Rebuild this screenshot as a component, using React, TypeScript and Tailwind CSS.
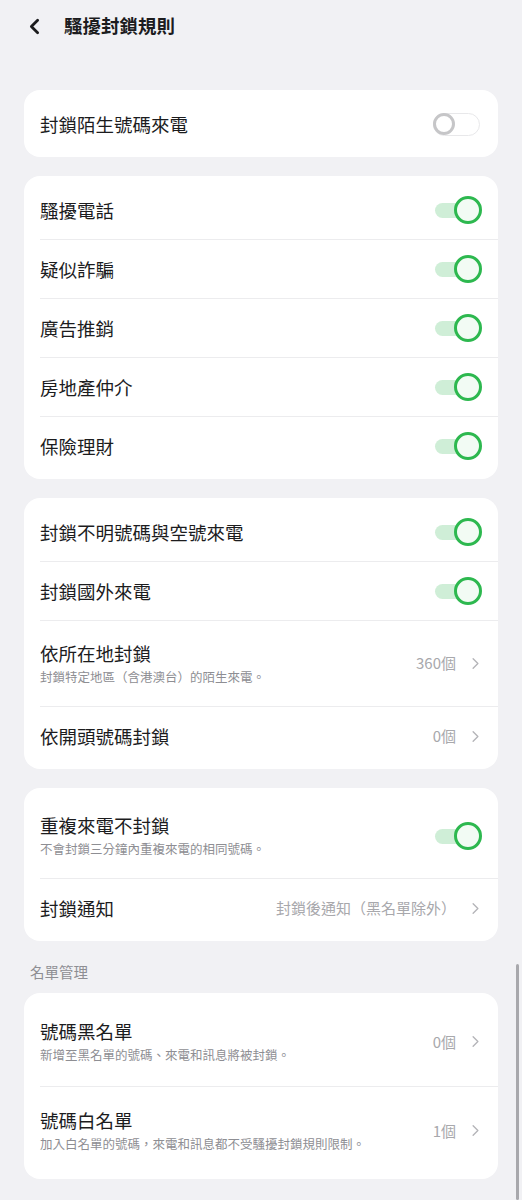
import { ChevronLeft, ChevronRight } from "lucide-react"

type Row = {
  title: string
  sub?: string
  toggle?: "on" | "off"
  value?: string
  tall?: boolean
}

function Toggle({ on }: { on: boolean }) {
  if (on) {
    return (
      <div className="relative w-[47px] h-[28px] shrink-0">
        <div className="absolute left-0 top-[7px] w-[38px] h-[15px] rounded-full bg-[#cfeed7]"></div>
        <div className="absolute right-0 top-0 w-[28px] h-[28px] rounded-full border-[3px] border-[#2db84f] bg-[#f2fbf4]"></div>
      </div>
    )
  }
  return (
    <div className="relative w-[47px] h-[23px] mr-[2px] shrink-0 rounded-full border-[1.5px] border-[#e8e8ea]">
      <div className="absolute left-[-1px] top-[-1px] w-[22px] h-[22px] rounded-full border-[3px] border-[#c6c6c8] bg-white"></div>
    </div>
  )
}

function Card({ rows, tallH = "h-[85px]" }: { rows: Row[]; tallH?: string }) {
  return (
    <div className="mx-[24px] bg-white rounded-[16px] pt-[5px] pb-[4px]">
      {rows.map((r, i) => (
        <div key={r.title} className={"ml-4 " + (i > 0 ? "border-t border-[#ececee]" : "")}>
          <div className={"flex items-center pr-4 " + (r.tall ? tallH : "h-[58px]")}>
            <div className="flex-1 min-w-0">
              <div className="text-[18.5px] leading-[24px] text-[#1c1c1e]">{r.title}</div>
              {r.sub && <div className="text-[12.5px] leading-[18px] mt-[3px] text-[#8e8e93]">{r.sub}</div>}
            </div>
            {r.toggle && <Toggle on={r.toggle === "on"} />}
            {r.value !== undefined && (
              <div className="flex items-center gap-[10px] text-[#a8a8ac]">
                <span className="text-[15px]">{r.value}</span>
                <ChevronRight size={19} strokeWidth={1.7} className="text-[#b4b4b8] mr-[-3px]" />
              </div>
            )}
          </div>
        </div>
      ))}
    </div>
  )
}

export default function App() {
  return (
    <div
      lang="zh-Hant"
      className="relative w-[522px] min-h-[1200px] bg-[#f1f1f4] pb-6"
      style={{ fontFamily: '"Noto Sans CJK TC", "Noto Sans", sans-serif' }}
    >
      <div className="h-[52px] flex items-center pl-[22px]">
        <ChevronLeft size={25} strokeWidth={2.7} className="text-[#1c1c1e]" />
        <h1 className="ml-[17px] text-[18.5px] font-bold text-[#1c1c1e]">騷擾封鎖規則</h1>
      </div>
      <div className="h-[38px]"></div>

      <div className="flex flex-col gap-[19px]">
        <Card rows={[{ title: "封鎖陌生號碼來電", toggle: "off" }]} />
        <Card
          rows={[
            { title: "騷擾電話", toggle: "on" },
            { title: "疑似詐騙", toggle: "on" },
            { title: "廣告推銷", toggle: "on" },
            { title: "房地產仲介", toggle: "on" },
            { title: "保險理財", toggle: "on" },
          ]}
        />
        <Card
          rows={[
            { title: "封鎖不明號碼與空號來電", toggle: "on" },
            { title: "封鎖國外來電", toggle: "on" },
            { title: "依所在地封鎖", sub: "封鎖特定地區（含港澳台）的陌生來電。", value: "360個", tall: true },
            { title: "依開頭號碼封鎖", value: "0個" },
          ]}
        />
        <Card
          rows={[
            { title: "重複來電不封鎖", sub: "不會封鎖三分鐘內重複來電的相同號碼。", toggle: "on", tall: true },
            { title: "封鎖通知", value: "封鎖後通知（黑名單除外）" },
          ]}
        />
      </div>

      <div className="pl-[30px] pt-[20px] pb-[10px] text-[14.5px] text-[#8e8e93]">名單管理</div>

      <Card
        tallH="h-[88px]"
        rows={[
          { title: "號碼黑名單", sub: "新增至黑名單的號碼、來電和訊息將被封鎖。", value: "0個", tall: true },
          { title: "號碼白名單", sub: "加入白名單的號碼，來電和訊息都不受騷擾封鎖規則限制。", value: "1個", tall: true },
        ]}
      />

      <div className="absolute right-[3px] top-[964px] w-[3px] h-[236px] rounded-full bg-[#a8a8ac]"></div>
    </div>
  )
}
